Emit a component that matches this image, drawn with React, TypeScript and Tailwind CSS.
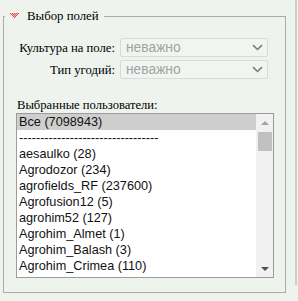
const items = [
  "Все (7098943)",
  "---------------------------------",
  "aesaulko (28)",
  "Agrodozor (234)",
  "agrofields_RF (237600)",
  "Agrofusion12 (5)",
  "agrohim52 (127)",
  "Agrohim_Almet (1)",
  "Agrohim_Balash (3)",
  "Agrohim_Crimea (110)",
];

function Tri() {
  const dots: [number, number][] = [];
  for (let y = 0; y < 5; y++) {
    for (let x = y; x <= 8 - y; x++) {
      if ((x + y) % 2 === 0) dots.push([x, y]);
    }
  }
  return (
    <svg width="9" height="6" viewBox="0 0 9 6" className="block">
      <path d="M0 0 L9 0 L4.5 5.5 Z" fill="#f6c4c4" />
      {dots.map(([x, y], i) => (
        <rect key={i} x={x} y={y} width="1" height="1" fill="#e04848" />
      ))}
    </svg>
  );
}

function Chevron() {
  return (
    <svg width="11" height="7" viewBox="0 0 11 7" className="block">
      <path d="M1 1.2 L5.5 5.5 L10 1.2" fill="none" stroke="#7c7c7c" strokeWidth="1.6" />
    </svg>
  );
}

function Select() {
  return (
    <div className="h-[19px] w-[148px] rounded-[2px] border border-[#d8dcd8] bg-[#f1f5f1] flex items-center justify-between pl-[5px] pr-[4px] font-['Liberation_Sans',Arial,sans-serif]">
      <span className="text-[13.8px] leading-none text-[#a3a3a3]">неважно</span>
      <Chevron />
    </div>
  );
}

export default function App() {
  return (
    <div className="relative w-[298px] h-[301px] bg-[#eef3ed] overflow-hidden pt-[8px]">
      <div className="absolute left-[295px] top-0 w-[2px] h-[285px] bg-[#cbcfcb]" />
      <fieldset className="ml-[3px] w-[283px] h-[285px] border border-[#a9aca9] pl-[12px] pr-[11px] font-['Liberation_Serif','Times_New_Roman',serif]">
        <legend className="ml-[-11px] pl-[5px] pr-[5px] h-[16px] leading-[16px] text-[12.8px] text-black">
          <span className="flex items-center">
            <Tri />
            <span className="ml-[8px]">Выбор полей</span>
          </span>
        </legend>
        <div className="mt-[14px] grid grid-cols-[99px_148px] gap-y-[3px] gap-x-[5px] items-center text-[12.7px] text-black">
          <div className="justify-self-end leading-[16px]">Культура на поле:</div>
          <Select />
          <div className="justify-self-end leading-[16px]">Тип угодий:</div>
          <Select />
        </div>
        <div className="mt-[18px] pl-[1px] h-[16px] leading-[16px] text-[12.6px] text-black">Выбранные пользователи:</div>
        <div className="w-[258px] h-[165px] border border-[#9c9c9c] bg-white flex overflow-hidden font-['Liberation_Sans',Arial,sans-serif]">
          <div className="flex-1 overflow-hidden">
            {items.map((t, i) => (
              <div
                key={i}
                className={
                  i === 0
                    ? "h-[16px] leading-[16px] pl-[2px] text-[12.7px] text-[#111] bg-[#cecece] whitespace-nowrap"
                    : "h-[16px] leading-[16px] pl-[2px] text-[12.7px] text-[#111] whitespace-nowrap"
                }
              >
                {t}
              </div>
            ))}
          </div>
          <div className="w-[17px] h-full bg-[#f1f1f1] flex flex-col items-center">
            <div className="h-[17px] w-full flex items-center justify-center">
              <svg width="8" height="4" viewBox="0 0 8 4"><path d="M0 4 L4 0 L8 4 Z" fill="#a3a3a3" /></svg>
            </div>
            <div className="mt-[1px] w-[14px] h-[19px] bg-[#c1c1c1]" />
            <div className="flex-1" />
            <div className="h-[17px] w-full flex items-center justify-center">
              <svg width="8" height="4" viewBox="0 0 8 4"><path d="M0 0 L8 0 L4 4 Z" fill="#505050" /></svg>
            </div>
          </div>
        </div>
      </fieldset>
    </div>
  );
}
